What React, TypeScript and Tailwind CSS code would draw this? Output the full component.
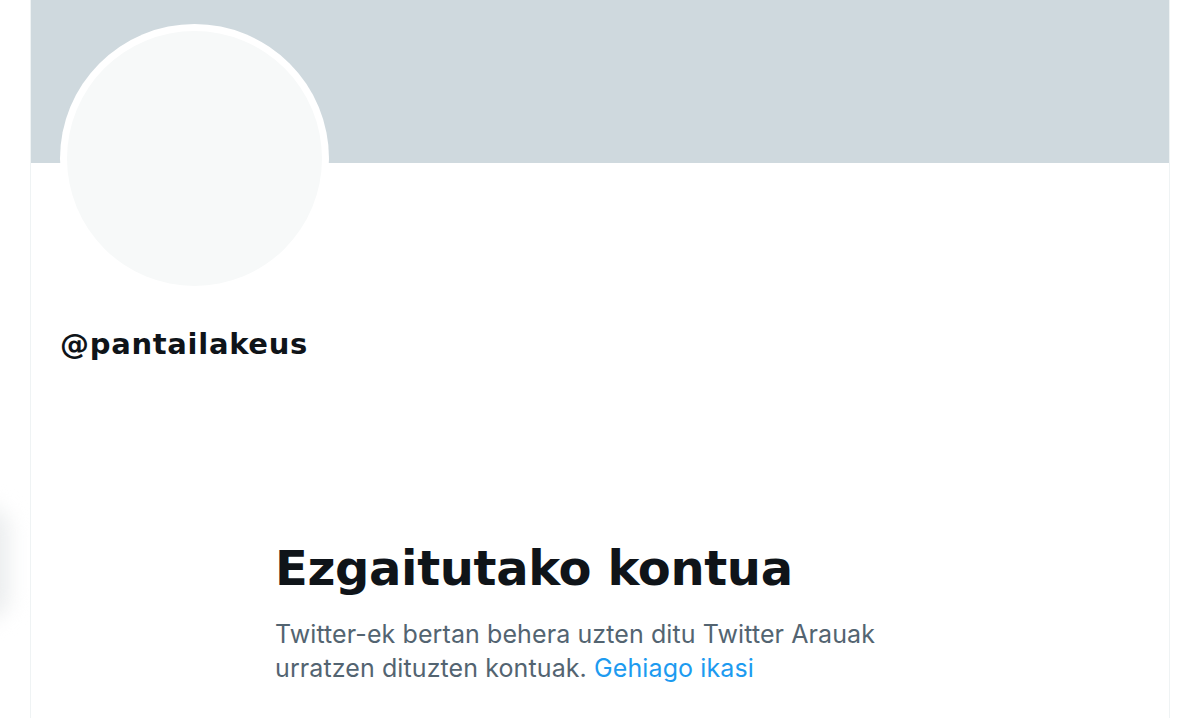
export default function App() {
  return (
    <div className="relative w-[1200px] h-[718px] overflow-hidden bg-white" style={{ fontFamily: "Inter, 'Noto Sans', sans-serif" }}>
      <div className="pointer-events-none absolute left-[-40px] top-[505px] h-[115px] w-[50px] rounded-full bg-[#eceeef] blur-[10px]" />
      <div className="relative mx-[30px] h-full border-x border-[#eff3f4] bg-white">
        <div className="h-[163px] bg-[#cfd9de]" />
        <div className="absolute left-[29px] top-[24px] h-[269px] w-[269px] rounded-full bg-white p-[7px]">
          <div className="h-full w-full rounded-full bg-[#f7f9f9]" />
        </div>
        <div className="pl-[29px] pt-[165px]">
          <div
            className="text-[29px] font-bold leading-[32px] tracking-[0.7px] text-[#0f1419]"
            style={{ fontFamily: "'DejaVu Sans', sans-serif" }}
          >
            @pantailakeus
          </div>
        </div>
        <div className="mx-auto mt-[180px] w-[650px]">
          <div
            className="text-[48px] font-bold leading-[56px] tracking-[-0.35px] text-[#0f1419]"
            style={{ fontFamily: "'DejaVu Sans', sans-serif" }}
          >
            Ezgaitutako kontua
          </div>
          <div className="mt-[21px] text-[25px] leading-[34px] tracking-[0.1px] text-[#536471]">
            Twitter-ek bertan behera uzten ditu Twitter Arauak urratzen dituzten kontuak.{" "}
            <span className="text-[#1d9bf0]">Gehiago ikasi</span>
          </div>
        </div>
      </div>
    </div>
  );
}
